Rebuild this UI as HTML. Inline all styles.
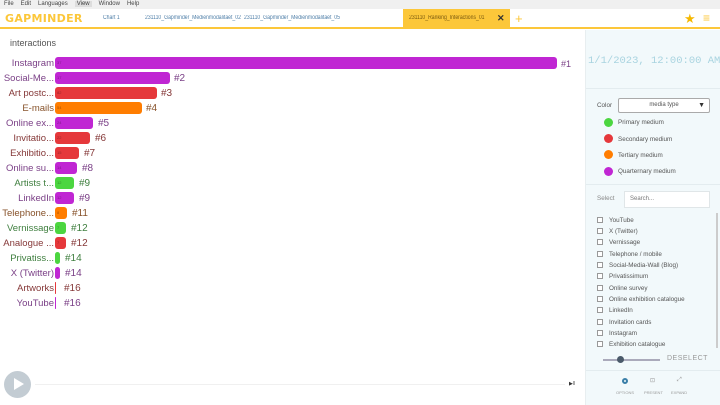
<!DOCTYPE html>
<html><head><meta charset="utf-8"><style>
*{margin:0;padding:0;box-sizing:border-box}
body{width:720px;height:405px;overflow:hidden;background:#fff;font-family:"Liberation Sans",sans-serif;position:relative}
.a{position:absolute;white-space:nowrap}
.menu{left:0;top:0;width:720px;height:9px;background:#f0f0f0;font-size:6px;color:#444;line-height:9px}
.menu span{margin-left:4px;margin-right:3px}
.tabs{left:0;top:9px;width:720px;height:20px;background:#fff;border-bottom:2px solid #fcc73a}
.tab{top:9px;height:19px;line-height:19px;font-size:6px;color:#4f7fa8;transform:scaleX(.85);transform-origin:left}
.lab{font-size:9.5px;text-align:right;width:54px;left:0;height:12px;line-height:14px;overflow:hidden}
.bar{left:55px;height:12px;border-radius:3px;font-size:4px;color:rgba(0,0,0,.35);line-height:12px;padding-left:2px}
.rk{font-size:10px;height:12px;line-height:14px}
.P{color:#7a3f86}.R{color:#853838}.O{color:#87522a}.G{color:#3f7f3f}
.bP{background:#c026d3}.bR{background:#e5383b}.bO{background:#ff7d00}.bG{background:#4cd640}
.side{left:585px;top:30px;width:135px;height:375px;background:#f2f9fb;border-left:1px solid #e8eef0}
.sm{font-size:6.3px;color:#555}
.dot{width:9px;height:9px;border-radius:50%}
.cb{width:6px;height:6px;border:1px solid #999;background:#fff}
</style></head><body>
<div class="a menu"><span>File</span><span>Edit</span><span>Languages</span><span style="background:#ddd;padding:0 2px">View</span><span>Window</span><span>Help</span></div>
<div class="a tabs"></div>
<div class="a" style="left:5px;top:12px;font-size:11px;font-weight:bold;color:#fcc73a;letter-spacing:0.3px;font-family:'DejaVu Sans',sans-serif;line-height:13px">GAPMINDER</div>
<div class="a tab" style="left:103px">Chart 1</div>
<div class="a tab" style="left:145px">231110_Gapminder_Medienmodalitaet_02</div>
<div class="a tab" style="left:244px">231110_Gapminder_Medienmodalitaet_05</div>
<div class="a" style="left:403px;top:9px;width:107px;height:20px;background:#fcc73a"></div>
<div class="a tab" style="left:409px;color:#7a5a10">231110_Ranking_Interactions_01</div>
<div class="a" style="left:497px;top:9px;line-height:19px;font-size:9px;color:#333;font-weight:bold">✕</div>
<div class="a" style="left:515px;top:9px;line-height:19px;font-size:13px;color:#fcc73a">+</div>
<div class="a" style="left:684px;top:9px;line-height:19px;font-size:13px;color:#f5b800">★</div>
<div class="a" style="left:703px;top:9px;line-height:19px;font-size:12px;color:#fcc73a">≡</div>

<div class="a" style="left:10px;top:38px;font-size:9px;color:#555">interactions</div>

<div class="a side"></div>
<div class="a" style="left:588px;top:55px;font-size:10.5px;color:#a9d4e0;font-family:'Liberation Mono',monospace">1/1/2023, 12:00:00 AM</div>
<div class="a" style="left:586px;top:88px;width:134px;height:1px;background:#e3ecef"></div>
<div class="a sm" style="left:597px;top:102px">Color</div>
<div class="a" style="left:618px;top:98px;width:92px;height:15px;border:1px solid #aaa;border-radius:2px;background:#fff;font-size:6px;color:#555;text-align:center;line-height:13px">media type<span style="position:absolute;right:4px;font-size:7px;color:#333">▼</span></div>
<div class="a dot" style="left:604px;top:118px;background:#4cd640"></div><div class="a sm" style="left:618px;top:119px">Primary medium</div>
<div class="a dot" style="left:604px;top:134px;background:#e5383b"></div><div class="a sm" style="left:618px;top:136px">Secondary medium</div>
<div class="a dot" style="left:604px;top:150px;background:#ff7d00"></div><div class="a sm" style="left:618px;top:152px">Tertiary medium</div>
<div class="a dot" style="left:604px;top:167px;background:#c026d3"></div><div class="a sm" style="left:618px;top:168px">Quarternary medium</div>
<div class="a" style="left:586px;top:184px;width:134px;height:1px;background:#e3ecef"></div>
<div class="a sm" style="left:597px;top:195px;color:#888">Select</div>
<div class="a" style="left:624px;top:191px;width:86px;height:17px;border:1px solid #e0e6e8;background:#fff;font-size:6px;color:#777;line-height:15px;padding-left:5px">Search...</div>
<div class="a" style="left:716px;top:213px;width:2px;height:135px;background:#ccc"></div>

<div class="a cb" style="left:597px;top:217px"></div><div class="a sm" style="left:609px;top:217px">YouTube</div>
<div class="a cb" style="left:597px;top:228px"></div><div class="a sm" style="left:609px;top:228px">X (Twitter)</div>
<div class="a cb" style="left:597px;top:239px"></div><div class="a sm" style="left:609px;top:239px">Vernissage</div>
<div class="a cb" style="left:597px;top:251px"></div><div class="a sm" style="left:609px;top:251px">Telephone / mobile</div>
<div class="a cb" style="left:597px;top:262px"></div><div class="a sm" style="left:609px;top:262px">Social-Media-Wall (Blog)</div>
<div class="a cb" style="left:597px;top:273px"></div><div class="a sm" style="left:609px;top:273px">Privatissimum</div>
<div class="a cb" style="left:597px;top:285px"></div><div class="a sm" style="left:609px;top:285px">Online survey</div>
<div class="a cb" style="left:597px;top:296px"></div><div class="a sm" style="left:609px;top:296px">Online exhibition catalogue</div>
<div class="a cb" style="left:597px;top:307px"></div><div class="a sm" style="left:609px;top:307px">LinkedIn</div>
<div class="a cb" style="left:597px;top:319px"></div><div class="a sm" style="left:609px;top:319px">Invitation cards</div>
<div class="a cb" style="left:597px;top:330px"></div><div class="a sm" style="left:609px;top:330px">Instagram</div>
<div class="a cb" style="left:597px;top:341px"></div><div class="a sm" style="left:609px;top:341px">Exhibition catalogue</div>

<div class="a" style="left:603px;top:359px;width:57px;height:2px;background:#aab"></div>
<div class="a" style="left:617px;top:356px;width:7px;height:7px;border-radius:50%;background:#4a5a6a"></div>
<div class="a" style="left:667px;top:355px;font-size:7px;color:#999;letter-spacing:.5px">DESELECT</div>
<div class="a" style="left:586px;top:370px;width:134px;height:1px;background:#e3ecef"></div>
<div class="a" style="left:622px;top:378px;width:6px;height:6px;border-radius:50%;border:2px solid #3a7fa8"></div>
<div class="a" style="left:616px;top:390px;font-size:4px;color:#999">OPTIONS</div>
<div class="a" style="left:650px;top:377px;font-size:6px;color:#999">⊡</div>
<div class="a" style="left:644px;top:390px;font-size:4px;color:#999">PRESENT</div>
<div class="a" style="left:677px;top:377px;font-size:6px;color:#999">⤢</div>
<div class="a" style="left:671px;top:390px;font-size:4px;color:#999">EXPAND</div>

<div class="a" style="left:4px;top:371px;width:27px;height:27px;border-radius:50%;background:#c3ccd3"></div>
<div class="a" style="left:14px;top:378px;width:0;height:0;border-left:10px solid #fff;border-top:6.5px solid transparent;border-bottom:6.5px solid transparent"></div>
<div class="a" style="left:35px;top:384px;width:530px;height:1px;background:#f0f0f0"></div>
<div class="a" style="left:569px;top:381px;font-size:5px;color:#333">▶‖</div>

<div class="a lab P" style="top:57px">Instagram</div><div class="a bar bP" style="top:57px;width:502px">37</div><div class="a rk P" style="top:57px;left:561px;font-size:9px">#1</div>
<div class="a lab P" style="top:72px">Social-Me...</div><div class="a bar bP" style="top:72px;width:115px">17</div><div class="a rk P" style="top:72px;left:174px">#2</div>
<div class="a lab R" style="top:87px">Art postc...</div><div class="a bar bR" style="top:87px;width:102px">82</div><div class="a rk R" style="top:87px;left:161px">#3</div>
<div class="a lab O" style="top:102px">E-mails</div><div class="a bar bO" style="top:102px;width:87px">54</div><div class="a rk O" style="top:102px;left:146px">#4</div>
<div class="a lab P" style="top:117px">Online ex...</div><div class="a bar bP" style="top:117px;width:38px">24</div><div class="a rk P" style="top:117px;left:98px">#5</div>
<div class="a lab R" style="top:132px">Invitatio...</div><div class="a bar bR" style="top:132px;width:35px">22</div><div class="a rk R" style="top:132px;left:95px">#6</div>
<div class="a lab R" style="top:147px">Exhibitio...</div><div class="a bar bR" style="top:147px;width:24px">15</div><div class="a rk R" style="top:147px;left:84px">#7</div>
<div class="a lab P" style="top:162px">Online su...</div><div class="a bar bP" style="top:162px;width:22px">14</div><div class="a rk P" style="top:162px;left:82px">#8</div>
<div class="a lab G" style="top:177px">Artists t...</div><div class="a bar bG" style="top:177px;width:19px">12</div><div class="a rk G" style="top:177px;left:79px">#9</div>
<div class="a lab P" style="top:192px">LinkedIn</div><div class="a bar bP" style="top:192px;width:19px">12</div><div class="a rk P" style="top:192px;left:79px">#9</div>
<div class="a lab O" style="top:207px">Telephone...</div><div class="a bar bO" style="top:207px;width:12px">8</div><div class="a rk O" style="top:207px;left:72px">#11</div>
<div class="a lab G" style="top:222px">Vernissage</div><div class="a bar bG" style="top:222px;width:11px">7</div><div class="a rk G" style="top:222px;left:71px">#12</div>
<div class="a lab R" style="top:237px">Analogue ...</div><div class="a bar bR" style="top:237px;width:11px">7</div><div class="a rk R" style="top:237px;left:71px">#12</div>
<div class="a lab G" style="top:252px">Privatiss...</div><div class="a bar bG" style="top:252px;width:5px"></div><div class="a rk G" style="top:252px;left:65px">#14</div>
<div class="a lab P" style="top:267px">X (Twitter)</div><div class="a bar bP" style="top:267px;width:5px"></div><div class="a rk P" style="top:267px;left:65px">#14</div>
<div class="a lab R" style="top:282px">Artworks</div><div class="a bar bR" style="top:282px;width:1px;padding:0"></div><div class="a rk R" style="top:282px;left:64px">#16</div>
<div class="a lab P" style="top:297px">YouTube</div><div class="a bar bP" style="top:297px;width:1px;padding:0"></div><div class="a rk P" style="top:297px;left:64px">#16</div>
</body></html>
